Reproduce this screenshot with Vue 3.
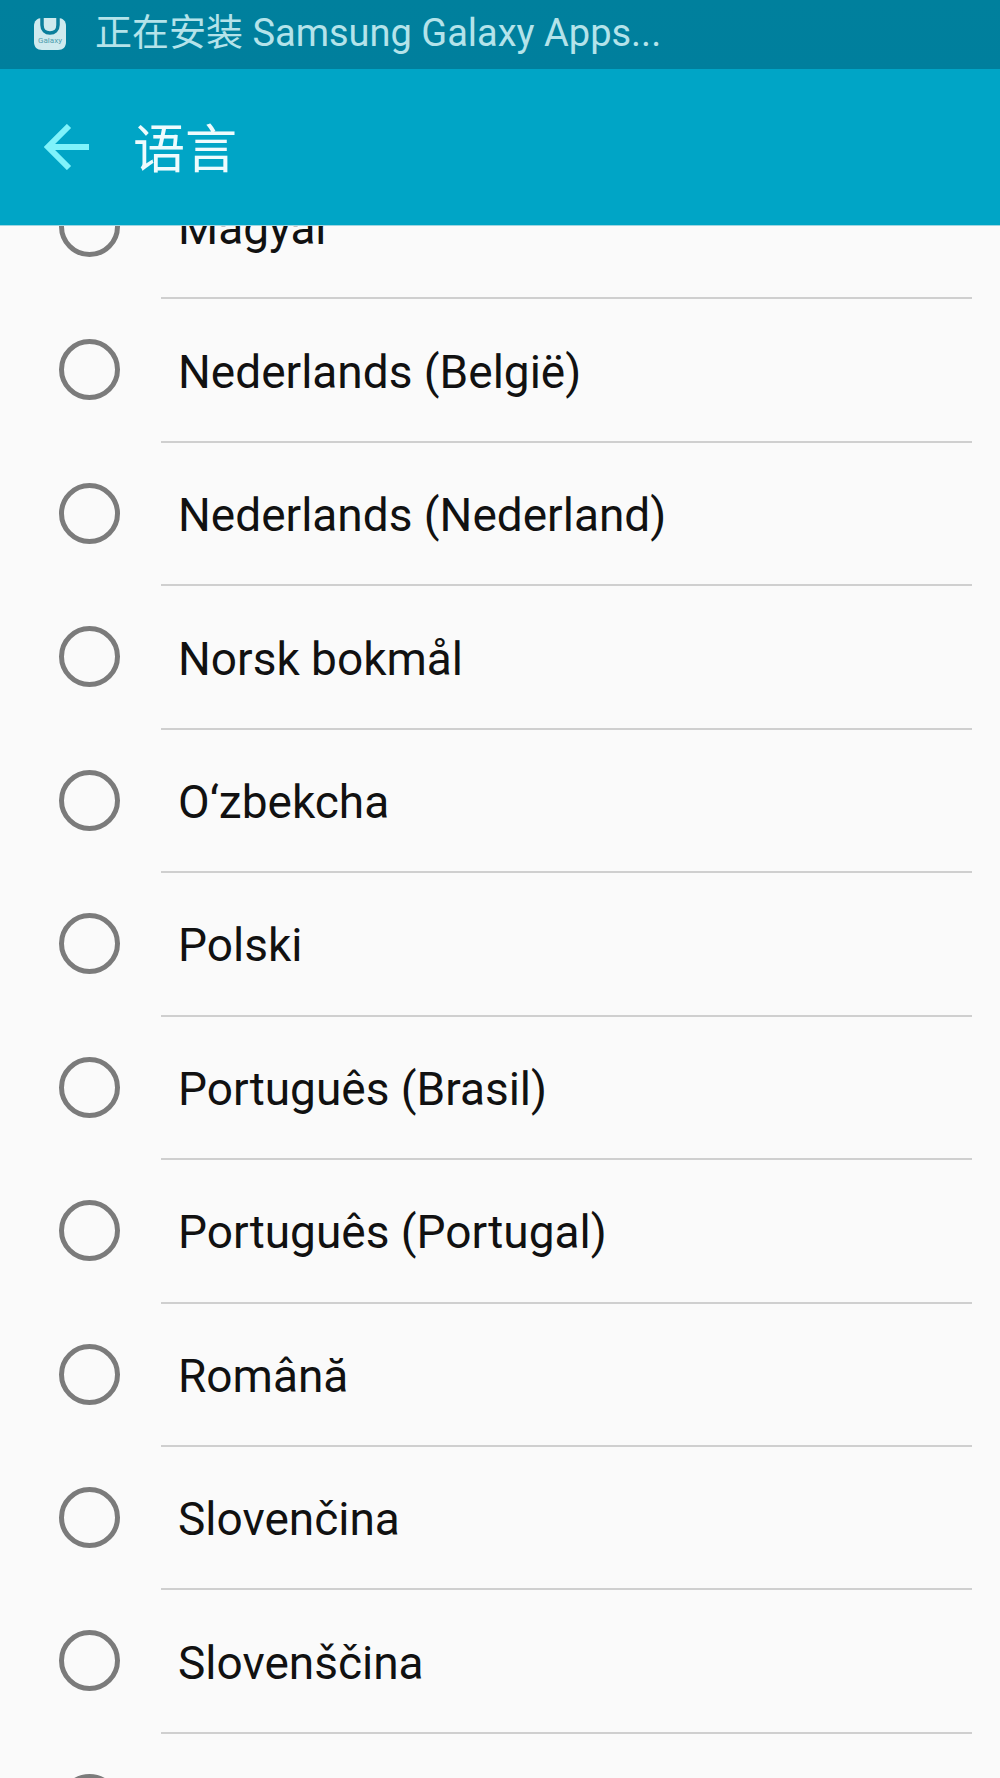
<script setup>
const languages = [
  'Magyar',
  'Nederlands (België)',
  'Nederlands (Nederland)',
  'Norsk bokmål',
  'O‘zbekcha',
  'Polski',
  'Português (Brasil)',
  'Português (Portugal)',
  'Română',
  'Slovenčina',
  'Slovenščina',
  'Suomi',
];
</script>

<template>
  <div class="screen">
    <div class="status-bar">
      <svg class="app-icon" viewBox="0 0 34 34" width="34" height="34">
        <path d="M9 1h16c5 0 8 3 8 8v16c0 5-3 8-8 8H9c-5 0-8-3-8-8V9c0-5 3-8 8-8z" fill="#cfeaee" />
        <path d="M9 1v7c0 5 3.500 8 8 8s8-3 8-8V1" fill="none" stroke="#0b7f9c" stroke-width="3.500" />
        <text x="17" y="26" text-anchor="middle" class="app-icon-text">Galaxy</text>
      </svg>
      <span class="status-text"><span class="status-cjk">正在安装</span> Samsung Galaxy Apps...</span>
    </div>
    <div class="toolbar">
      <svg class="back" viewBox="0 0 46 46" width="46" height="46">
        <path d="M45 23H5M25 2 4 23l21 21" fill="none" stroke="#7ff3fb" stroke-width="6" />
      </svg>
      <span class="title">语言</span>
    </div>
    <div class="viewport">
      <ul class="list">
        <li v-for="lang in languages" :key="lang" class="row">
          <span class="radio"></span>
          <span class="label">{{ lang }}</span>
        </li>
      </ul>
    </div>
  </div>
</template>

<style scoped>
.screen {
  width: 1000px;
  height: 1778px;
  overflow: hidden;
  display: flex;
  flex-direction: column;
  background: #fafafa;
  font-family: Roboto, "Noto Sans CJK SC", sans-serif;
}

.status-bar {
  height: 69px;
  flex: none;
  display: flex;
  align-items: center;
  padding-left: 33px;
  background: linear-gradient(#00809d, #007f9d);
}

.app-icon {
  flex: none;
  margin-bottom: 2px;
}

.app-icon-text {
  font-size: 8px;
  fill: #4f9fae;
}

.status-text {
  margin-left: 28px;
  margin-bottom: 10px;
  font-size: 38px;
  color: #b4e3ea;
  white-space: nowrap;
}

.status-cjk {
  font-size: 37px;
}

.toolbar {
  height: 157px;
  flex: none;
  display: flex;
  align-items: center;
  padding-left: 44px;
  background: #00a5c6;
  border-bottom: 1px solid #9fd6e2;
  box-sizing: border-box;
}

.back {
  flex: none;
}

.title {
  margin-left: 43px;
  margin-bottom: 4px;
  font-size: 52px;
  color: #eefbfd;
}

.viewport {
  flex: 1;
  overflow: hidden;
}

.list {
  list-style: none;
  margin: -70px 0 0;
  padding: 0;
}

.row {
  position: relative;
  height: 143.44px;
  display: flex;
  align-items: center;
  box-sizing: border-box;
  padding-left: 178px;
}

.row::after {
  content: "";
  position: absolute;
  left: 161px;
  right: 28px;
  bottom: 0;
  height: 2px;
  background: #cfcfcf;
}

.radio {
  position: absolute;
  left: 59px;
  top: 40px;
  width: 61px;
  height: 61px;
  box-sizing: border-box;
  border: 5px solid #7b7b7b;
  border-radius: 50%;
}

.label {
  margin-top: 1px;
  font-size: 46px;
  color: #111;
  white-space: nowrap;
}
</style>
